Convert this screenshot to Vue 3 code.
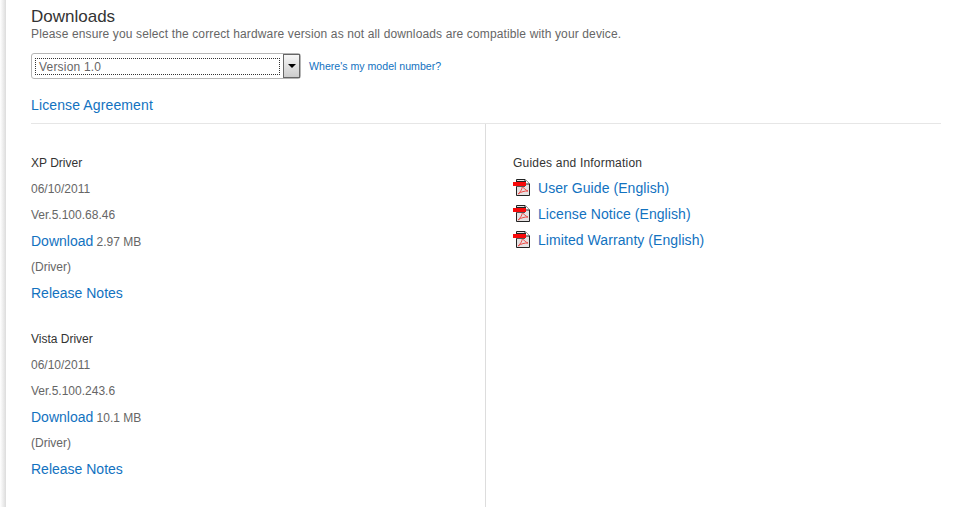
<script setup>
const drivers = [
  { name: 'XP Driver', date: '06/10/2011', ver: 'Ver.5.100.68.46', size: '2.97 MB' },
  { name: 'Vista Driver', date: '06/10/2011', ver: 'Ver.5.100.243.6', size: '10.1 MB' }
]
const guides = ['User Guide (English)', 'License Notice (English)', 'Limited Warranty (English)']
</script>

<template>
  <div class="page">
    <div class="content">
      <h2 class="title">Downloads</h2>
      <p class="intro">Please ensure you select the correct hardware version as not all downloads are compatible with your device.</p>
      <div class="version-row">
        <div class="select">
          <div class="select-value"><span>Version 1.0</span></div>
          <div class="select-btn"><span class="caret"></span></div>
        </div>
        <a class="model-link">Where's my model number?</a>
      </div>
      <a class="license">License Agreement</a>
      <div class="columns">
        <div class="col-left">
          <div v-for="d in drivers" :key="d.name" class="driver">
            <div class="row name">{{ d.name }}</div>
            <div class="row">{{ d.date }}</div>
            <div class="row">{{ d.ver }}</div>
            <div class="row"><a class="big">Download</a> {{ d.size }}</div>
            <div class="row">(Driver)</div>
            <div class="row"><a class="big">Release Notes</a></div>
          </div>
        </div>
        <div class="col-right">
          <div class="row name guides-title">Guides and Information</div>
          <div v-for="g in guides" :key="g" class="row guide">
            <svg class="pdf" width="17" height="17" viewBox="0 0 17 17">
              <path d="M3.5 .5H12L16.500 5V16.500H3.500Z" fill="#e6e2e2" stroke="#222" />
              <path d="M12 .5V5H16.500" fill="#fff" stroke="#222" />
              <path d="M9.500 7C9 10 8 12.500 5 15C8.500 12.500 11.500 12 15 12C12.500 11 10.500 9.500 9.500 7Z" fill="none" stroke="#ee4a46" />
              <rect x="0" y="3" width="13" height="4" fill="#f80a0a" />
              <path d="M3 2.500H13" stroke="#222" />
              <path d="M3 7.500H12" stroke="#555" />
            </svg>
            <a class="big guide-link">{{ g }}</a>
          </div>
        </div>
      </div>
    </div>
  </div>
</template>

<style scoped>
.page {
  width: 965px;
  height: 507px;
  overflow: hidden;
  box-sizing: border-box;
  padding-left: 31px;
  background: linear-gradient(90deg, #fff, #dcdcdc) no-repeat left top / 6px 100%, #fff;
  font-family: "Liberation Sans", Arial, sans-serif;
  font-size: 12px;
  color: #666;
}
.content {
  width: 910px;
  padding-top: 8px;
}
.title {
  margin: 0;
  font-size: 17px;
  line-height: 18px;
  font-weight: 400;
  color: #333;
}
.intro {
  margin: 0;
  height: 17px;
  line-height: 16px;
  letter-spacing: 0.13px;
}
.version-row {
  display: flex;
  align-items: center;
  margin-top: 10px;
}
.select {
  width: 270px;
  height: 26px;
  box-sizing: border-box;
  display: flex;
  border: 1px solid #b5b5b5;
  border-radius: 3px;
}
.select-value {
  flex: 1;
  padding: 4px 3px;
}
.select-value span {
  display: block;
  height: 17px;
  box-sizing: border-box;
  border: 1px dotted #333;
  padding-left: 3px;
  line-height: 16px;
  letter-spacing: 0.2px;
}
.select-btn {
  width: 15px;
  border: 1px solid #666;
  background: linear-gradient(#f6f6f6, #cdcdcd);
  display: flex;
  align-items: center;
  justify-content: center;
}
.caret {
  border-left: 4px solid transparent;
  border-right: 4px solid transparent;
  border-top: 4px solid #000;
}
.model-link {
  margin-left: 8px;
  font-size: 10.6px;
  color: #1272bf;
}
.license {
  display: block;
  margin-top: 16px;
  height: 28px;
  line-height: 20px;
  font-size: 14px;
  letter-spacing: 0.12px;
  color: #1272bf;
  border-bottom: 1px solid #e6e6e6;
}
.columns {
  display: flex;
  height: 400px;
}
.col-left {
  width: 454px;
  padding-top: 26px;
  border-right: 1px solid #ddd;
}
.col-right {
  padding-top: 26px;
  padding-left: 27px;
}
.driver {
  margin-bottom: 20px;
}
.row {
  height: 26px;
  line-height: 26px;
  white-space: nowrap;
}
.name {
  color: #333;
}
.guides-title {
  letter-spacing: 0.2px;
}
.big {
  font-size: 14px;
  color: #1272bf;
}
.guide {
  display: flex;
  align-items: center;
}
.guide-link {
  margin-bottom: 2px;
  letter-spacing: 0.07px;
}
.pdf {
  margin-right: 8px;
  margin-bottom: 3px;
  flex: none;
}
</style>
